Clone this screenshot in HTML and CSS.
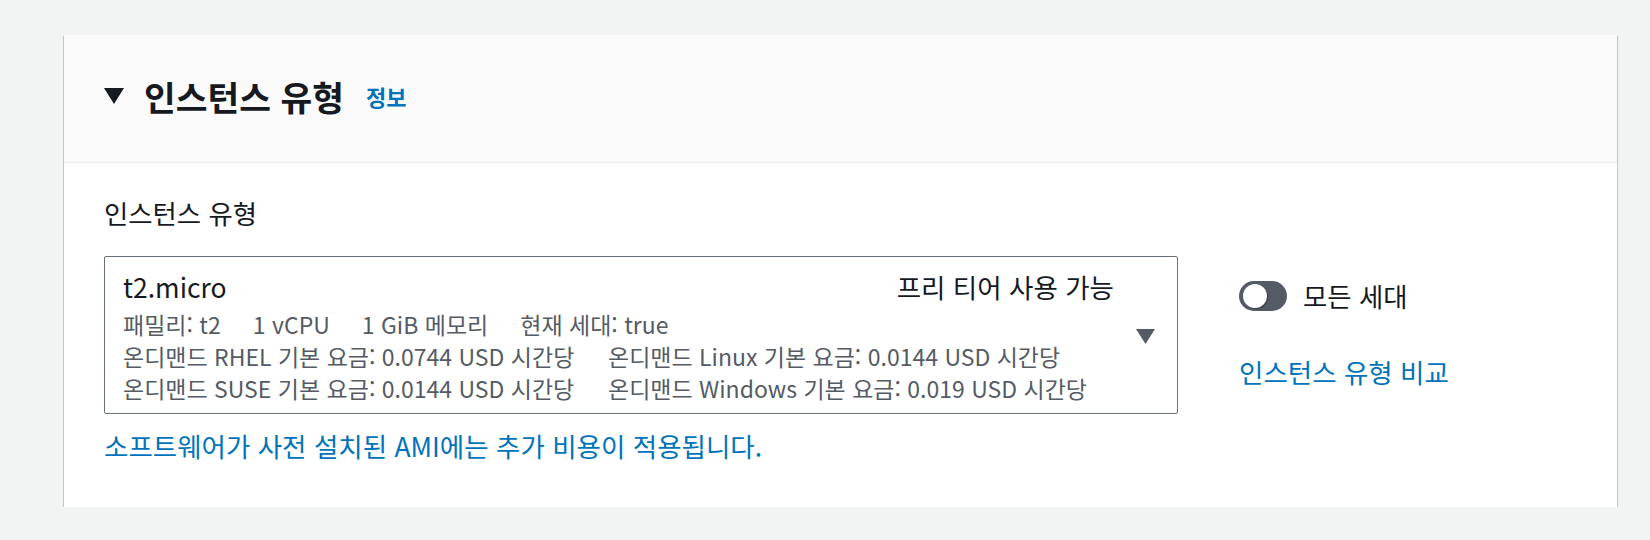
FILE: index.html
```html
<!DOCTYPE html>
<html lang="ko">
<head>
<meta charset="utf-8">
<title>인스턴스 유형</title>
<link rel="stylesheet" href="styles.css">
</head>
<body>
<div class="page">
  <section class="card">
    <header class="card-header">
      <svg class="caret" width="20" height="16" viewBox="0 0 20 16"><polygon points="0,0 20,0 10,16" fill="#16191f"/></svg>
      <h2 class="title">인스턴스 유형</h2>
      <a class="info">정보</a>
    </header>
    <div class="card-body">
      <div class="label">인스턴스 유형</div>
      <div class="field-row">
        <div class="field">
          <div class="select">
            <div class="select-main">
              <div class="row-top">
                <span class="type-name">t2.micro</span>
                <span class="free-tier">프리 티어 사용 가능</span>
              </div>
              <div class="detail">
                <span>패밀리: t2</span><span>1 vCPU</span><span>1 GiB 메모리</span><span>현재 세대: true</span>
              </div>
              <div class="detail">
                <span class="col1">온디맨드 RHEL 기본 요금: 0.0744 USD 시간당</span><span>온디맨드 Linux 기본 요금: 0.0144 USD 시간당</span>
              </div>
              <div class="detail">
                <span class="col1">온디맨드 SUSE 기본 요금: 0.0144 USD 시간당</span><span>온디맨드 Windows 기본 요금: 0.019 USD 시간당</span>
              </div>
            </div>
            <svg class="arrow" width="19" height="15" viewBox="0 0 19 15"><polygon points="0,0 19,0 9.5,15" fill="#545b64"/></svg>
          </div>
          <a class="link bottom-link">소프트웨어가 사전 설치된 AMI에는 추가 비용이 적용됩니다.</a>
        </div>
        <div class="side">
          <div class="toggle-row">
            <span class="toggle"><span class="knob"></span></span>
            <span class="toggle-label">모든 세대</span>
          </div>
          <a class="link">인스턴스 유형 비교</a>
        </div>
      </div>
    </div>
  </section>
</div>
</body>
</html>
```

FILE: styles.css
```css
html, body {
  margin: 0;
  padding: 0;
  background: #f2f3f3;
}
body {
  font-family: "Noto Sans CJK KR", "Noto Sans", sans-serif;
  color: #16191f;
}
.page {
  padding: 35px 33px 0 64px;
}
.card {
  background: #ffffff;
  box-shadow: 0 1px 1px 0 rgba(0, 28, 36, 0.3), 1px 1px 1px 0 rgba(0, 28, 36, 0.15), -1px 1px 1px 0 rgba(0, 28, 36, 0.15);
}
.card-header {
  background: #fafafa;
  border-bottom: 1px solid #eaeded;
  display: flex;
  align-items: center;
  padding: 41px 40px 46px 40px;
  height: 40px;
}
.caret {
  display: block;
  margin-right: 20px;
}
.title {
  margin: 0;
  font-size: 34.5px;
  font-weight: 700;
  line-height: 40px;
  color: #16191f;
}
.info {
  margin-left: 22px;
  font-size: 22px;
  font-weight: 700;
  color: #0073bb;
  line-height: 40px;
}
.card-body {
  padding: 33px 40px 44px 40px;
}
.label {
  font-size: 26.4px;
  line-height: 34px;
  margin-bottom: 26px;
}
.field-row {
  display: flex;
  align-items: flex-start;
  gap: 61px;
}
.field {
  width: 1074px;
  flex: none;
}
.select {
  border: 1px solid #687078;
  border-radius: 2px;
  display: flex;
  align-items: center;
  padding: 12px 22px 9px 18px;
}
.select-main {
  flex: 1;
}
.row-top {
  display: flex;
  justify-content: space-between;
  font-size: 26.5px;
  line-height: 36px;
  margin-bottom: 3px;
  margin-right: 22px;
}
.detail {
  font-size: 23px;
  line-height: 32px;
  color: #545b64;
  display: flex;
  gap: 32px;
  white-space: nowrap;
}
.detail .col1 {
  width: 453px;
  flex: none;
}
.arrow {
  display: block;
}
.link {
  color: #0073bb;
  font-size: 26.5px;
  line-height: 34px;
}
.bottom-link {
  display: block;
  margin-top: 15px;
}
.side {
  display: flex;
  flex-direction: column;
  gap: 42px;
  padding-top: 23px;
}
.toggle-row {
  display: flex;
  align-items: center;
  gap: 16px;
  height: 34px;
}
.toggle {
  width: 48px;
  height: 30px;
  border-radius: 15px;
  background: #545b64;
  display: flex;
  align-items: center;
  padding-left: 4px;
  box-sizing: border-box;
}
.knob {
  width: 24px;
  height: 24px;
  border-radius: 50%;
  background: #ffffff;
  box-shadow: 1px 1px 1px rgba(0, 0, 0, 0.35);
}
.toggle-label {
  font-size: 26.4px;
  line-height: 34px;
  color: #16191f;
}
```
